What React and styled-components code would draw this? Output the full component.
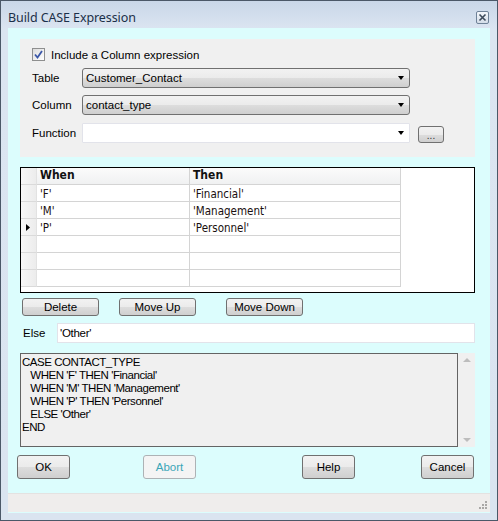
import styled, { createGlobalStyle } from "styled-components";

const Global = createGlobalStyle`
  html, body { margin: 0; padding: 0; background: #ffffff; }
  * { box-sizing: border-box; }
`;

const Window = styled.div`
  width: 498px;
  height: 521px;
  border: 1px solid #4b5868;
  background: linear-gradient(#c9d7e8 0px, #dbe5f1 28px, #dae4f0 100%);
  display: flex;
  flex-direction: column;
  padding: 0 7px 7px 7px;
  font-family: "Liberation Sans", Arial, sans-serif;
  font-size: 12px;
  color: #000;
`;

const TitleBar = styled.div`
  height: 27px;
  display: flex;
  align-items: center;
  justify-content: space-between;
  padding: 5px 1px 0 0;
`;

const Title = styled.span`
  font-family: "Noto Sans", "Liberation Sans", sans-serif;
  font-size: 12.5px;
  color: #1b2f48;
  letter-spacing: -0.1px;
`;

const CloseBox = styled.div`
  width: 13px;
  height: 13px;
  border: 1px solid #6f8298;
  border-radius: 2px;
  background: linear-gradient(#f4f7fb, #d4dde8);
  display: flex;
  align-items: center;
  justify-content: center;
`;

const Client = styled.div`
  flex: 1;
  background: #dcfdfd;
  display: flex;
  flex-direction: column;
  padding: 11px 15px 0 12px;
`;

const Panel = styled.div`
  background: #f0f0f0;
  height: 118px;
  padding: 9px 0 0 12px;
  display: flex;
  flex-direction: column;
`;

const CheckRow = styled.label`
  display: flex;
  align-items: center;
  height: 13px;
  gap: 6px;
  margin-bottom: 7px;
  font-size: 11.5px;
`;

const CheckBox = styled.span`
  width: 13px;
  height: 13px;
  border: 1px solid #8e8f8f;
  background: linear-gradient(135deg, #dcdcdc, #ffffff);
  display: flex;
  align-items: center;
  justify-content: center;
`;

const FieldRow = styled.div`
  display: flex;
  align-items: center;
  height: ${(p) => p.$h ?? 20}px;
  margin-bottom: ${(p) => p.$gap ?? 7}px;
`;

const FieldLabel = styled.span`
  width: 50px;
  font-size: 11.5px;
`;

const Select = styled.div`
  width: 328px;
  height: 20px;
  border: 1px solid ${(p) => (p.$flat ? "#e2e3ea" : "#707070")};
  border-radius: ${(p) => (p.$flat ? 1 : 3)}px;
  background: ${(p) =>
    p.$flat ? "#ffffff" : "linear-gradient(#f2f2f2 0%, #ebebeb 50%, #dddddd 51%, #cfcfcf 100%)"};
  display: flex;
  align-items: center;
  justify-content: space-between;
  padding: 0 5px 0 3px;
  font-size: 11.5px;
`;

const Arrow = styled.span`
  width: 0;
  height: 0;
  border-left: 3.5px solid transparent;
  border-right: 3.5px solid transparent;
  border-top: 4px solid #000;
`;

const SmallButton = styled.div`
  width: 26px;
  height: 17px;
  margin-left: 8px;
  margin-top: 3px;
  border: 1px solid #707070;
  border-radius: 3px;
  background: linear-gradient(#f2f2f2 0%, #ebebeb 50%, #dddddd 51%, #cfcfcf 100%);
  font-size: 10px;
  display: flex;
  align-items: flex-end;
  justify-content: center;
  line-height: 12px;
  color: #333;
`;

const Grid = styled.div`
  margin-top: 10px;
  height: 126px;
  width: 455px;
  border: 1px solid #000;
  background: #fff;
  display: grid;
  grid-template-columns: 16px 153px 211px;
  grid-auto-rows: 17px;
  align-content: start;
  font-family: "DejaVu Sans", sans-serif;
  font-stretch: condensed;
  font-size: 11.5px;
`;

const RowHead = styled.div`
  background: linear-gradient(90deg, #f7f7f7, #ececec);
  border-bottom: 1px solid #dadada;
  border-right: 1px solid #e2e2e2;
  display: flex;
  align-items: center;
  padding-left: 5px;
`;

const HeadCell = styled.div`
  background: linear-gradient(#fbfbfb, #f0f1f2);
  border-bottom: 1px solid #d4d4d4;
  border-right: 1px solid #d4d4d4;
  font-weight: bold;
  font-size: 12px;
  padding: 0 0 0 3px;
  color: #111;
`;

const Cell = styled.div`
  border-bottom: 1px solid #d4d4d4;
  border-right: 1px solid #d4d4d4;
  padding: 2px 0 0 3px;
  color: #1a0f0f;
  white-space: nowrap;
`;

const ButtonRow = styled.div`
  display: flex;
  margin-top: 5px;
  padding-left: 2px;
`;

const Button = styled.div`
  width: ${(p) => p.$w ?? 77}px;
  height: ${(p) => p.$h ?? 18}px;
  margin-left: ${(p) => p.$ml ?? 0}px;
  border: 1px solid ${(p) => (p.$disabled ? "#adb2b5" : "#707070")};
  border-radius: 3px;
  background: ${(p) =>
    p.$disabled ? "#f4f4f4" : "linear-gradient(#f2f2f2 0%, #ebebeb 50%, #dddddd 51%, #cfcfcf 100%)"};
  color: ${(p) => (p.$disabled ? "#3aa6b8" : "#000")};
  display: flex;
  align-items: center;
  justify-content: center;
  font-size: 11.5px;
`;

const ElseRow = styled.div`
  display: flex;
  align-items: center;
  margin-top: 7px;
  height: 20px;
`;

const ElseLabel = styled.span`
  width: 37px;
  padding-left: 3px;
  font-size: 11.5px;
`;

const TextInput = styled.div`
  flex: 1;
  height: 20px;
  border: 1px solid #e2e3ea;
  background: #fff;
  display: flex;
  align-items: center;
  padding-left: 2px;
  font-size: 11.5px;
  letter-spacing: -0.3px;
`;

const Memo = styled.div`
  display: flex;
  margin-top: 10px;
  height: 94px;
`;

const MemoText = styled.pre`
  margin: 0;
  flex: 1;
  border: 1px solid #646464;
  background: #f0f0f0;
  padding: 2px 1px;
  font-family: "Liberation Sans", Arial, sans-serif;
  font-size: 11.5px;
  line-height: 13px;
  letter-spacing: -0.45px;
`;

const ScrollBar = styled.div`
  width: 17px;
  background: #f0f0f0;
  display: flex;
  flex-direction: column;
  justify-content: space-between;
  align-items: center;
  padding: 5px 0;
`;

const ScrollArrow = styled.span`
  width: 0;
  height: 0;
  border-left: 4px solid transparent;
  border-right: 4px solid transparent;
  ${(p) => (p.$up ? "border-bottom: 4px solid #bdbdbd;" : "border-top: 4px solid #bdbdbd;")}
`;

const FooterButtons = styled.div`
  display: flex;
  margin-top: 8px;
  margin-left: -3px;
`;

const StatusBar = styled.div`
  margin: 14px -15px 0 -12px;
  height: 19px;
  background: #efedec;
  border-top: 1px solid #e4e2e1;
  display: flex;
  justify-content: flex-end;
  align-items: flex-end;
  padding: 0 2px 2px 0;
`;

const rows = [
  ["'F'", "'Financial'"],
  ["'M'", "'Management'"],
  ["'P'", "'Personnel'", true],
  ["", ""],
  ["", ""],
  ["", ""],
];

const memo = `CASE CONTACT_TYPE
   WHEN 'F' THEN 'Financial'
   WHEN 'M' THEN 'Management'
   WHEN 'P' THEN 'Personnel'
   ELSE 'Other'
END`;

export default function App() {
  return (
    <>
      <Global />
      <Window>
        <TitleBar>
          <Title>Build CASE Expression</Title>
          <CloseBox>
            <svg width="9" height="9" viewBox="0 0 9 9">
              <path d="M1.5 1.5 L7.5 7.5 M7.5 1.5 L1.5 7.5" stroke="#3d4a5a" strokeWidth="1.6" />
            </svg>
          </CloseBox>
        </TitleBar>
        <Client>
          <Panel>
            <CheckRow>
              <CheckBox>
                <svg width="9" height="9" viewBox="0 0 9 9">
                  <path d="M1 4.5 L3.5 7.5 L8 1" stroke="#3b57a8" strokeWidth="1.8" fill="none" />
                </svg>
              </CheckBox>
              Include a Column expression
            </CheckRow>
            <FieldRow>
              <FieldLabel>Table</FieldLabel>
              <Select>
                Customer_Contact
                <Arrow />
              </Select>
            </FieldRow>
            <FieldRow>
              <FieldLabel>Column</FieldLabel>
              <Select>
                contact_type
                <Arrow />
              </Select>
            </FieldRow>
            <FieldRow $gap={0} $h={21}>
              <FieldLabel>Function</FieldLabel>
              <Select $flat>
                <span />
                <Arrow />
              </Select>
              <SmallButton>...</SmallButton>
            </FieldRow>
          </Panel>

          <Grid>
            <RowHead />
            <HeadCell>When</HeadCell>
            <HeadCell>Then</HeadCell>
            {rows.map(([w, t, current], i) => (
              <>
                <RowHead key={"h" + i}>
                  {current && (
                    <svg width="4" height="7" viewBox="0 0 4 7">
                      <path d="M0 0 L4 3.5 L0 7 Z" fill="#000" />
                    </svg>
                  )}
                </RowHead>
                <Cell key={"w" + i}>{w}</Cell>
                <Cell key={"t" + i}>{t}</Cell>
              </>
            ))}
          </Grid>

          <ButtonRow>
            <Button>Delete</Button>
            <Button $ml={20}>Move Up</Button>
            <Button $ml={30}>Move Down</Button>
          </ButtonRow>

          <ElseRow>
            <ElseLabel>Else</ElseLabel>
            <TextInput>'Other'</TextInput>
          </ElseRow>

          <Memo>
            <MemoText>{memo}</MemoText>
            <ScrollBar>
              <ScrollArrow $up />
              <ScrollArrow />
            </ScrollBar>
          </Memo>

          <FooterButtons>
            <Button $w={53} $h={24}>OK</Button>
            <Button $w={53} $h={24} $ml={73} $disabled>Abort</Button>
            <Button $w={53} $h={24} $ml={106}>Help</Button>
            <Button $w={53} $h={24} $ml={66}>Cancel</Button>
          </FooterButtons>

          <StatusBar>
            <svg width="10" height="10" viewBox="0 0 10 10">
              {[
                [8, 2], [8, 5], [8, 8], [5, 5], [5, 8], [2, 8],
              ].map(([x, y]) => (
                <rect key={x + "-" + y} x={x - 1} y={y - 1} width="2" height="2" fill="#a9a7a6" />
              ))}
            </svg>
          </StatusBar>
        </Client>
      </Window>
    </>
  );
}
